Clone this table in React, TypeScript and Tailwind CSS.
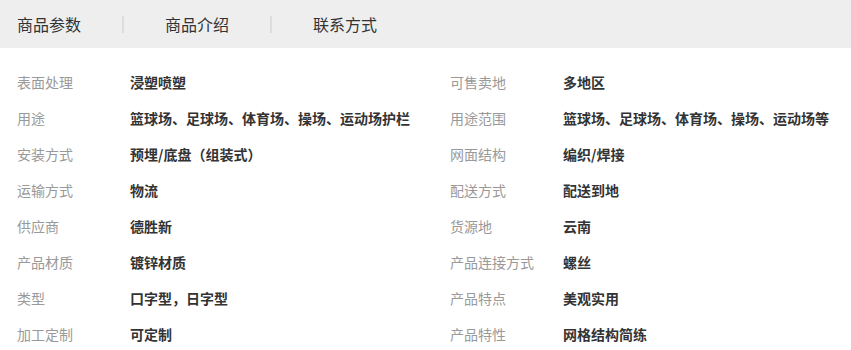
import React from "react";

const rows: [string, string, string, string][] = [
  ["表面处理", "浸塑喷塑", "可售卖地", "多地区"],
  ["用途", "篮球场、足球场、体育场、操场、运动场护栏", "用途范围", "篮球场、足球场、体育场、操场、运动场等"],
  ["安装方式", "预埋/底盘（组装式）", "网面结构", "编织/焊接"],
  ["运输方式", "物流", "配送方式", "配送到地"],
  ["供应商", "德胜新", "货源地", "云南"],
  ["产品材质", "镀锌材质", "产品连接方式", "螺丝"],
  ["类型", "口字型，日字型", "产品特点", "美观实用"],
  ["加工定制", "可定制", "产品特性", "网格结构简练"],
];

export default function App() {
  return (
    <div
      className="w-[851px] h-[350px] overflow-hidden bg-white"
      style={{ fontFamily: '"Noto Sans CJK SC", "Noto Sans", sans-serif' }}
    >
      <div className="h-[48px] bg-[#eeeeee] flex items-center pl-[17px] text-[16px] text-[#333333]">
        <span className="leading-[20px]">商品参数</span>
        <span className="mx-[41px] w-[2px] h-[17px] bg-[#dddddd]" />
        <span className="leading-[20px]">商品介绍</span>
        <span className="mx-[41px] w-[2px] h-[17px] bg-[#dddddd]" />
        <span className="leading-[20px]">联系方式</span>
      </div>
      <div className="pt-[16px] pl-[17px] grid grid-cols-[433px_1fr] text-[14px]">
        {rows.map((r, i) => (
          <React.Fragment key={i}>
            <div className="flex items-center h-[36px]">
              <span className="w-[113px] text-[#999999]">{r[0]}</span>
              <span className="font-bold text-[#333333]">{r[1]}</span>
            </div>
            <div className="flex items-center h-[36px]">
              <span className="w-[113px] text-[#999999]">{r[2]}</span>
              <span className="font-bold text-[#333333]">{r[3]}</span>
            </div>
          </React.Fragment>
        ))}
      </div>
    </div>
  );
}
